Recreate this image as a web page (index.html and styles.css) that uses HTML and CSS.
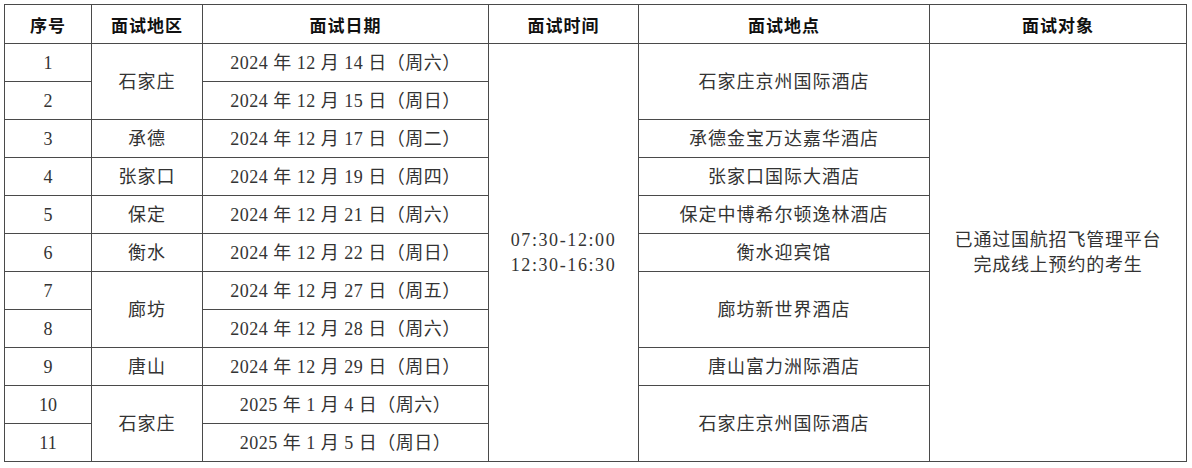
FILE: index.html
```html
<!DOCTYPE html>
<html lang="zh-CN">
<head>
<meta charset="utf-8">
<link rel="stylesheet" href="styles.css">
</head>
<body>
<div class="page">
<table class="schedule">
  <colgroup>
    <col class="c-no">
    <col class="c-area">
    <col class="c-date">
    <col class="c-time">
    <col class="c-place">
    <col class="c-target">
  </colgroup>
  <thead>
    <tr>
      <th>序号</th>
      <th>面试地区</th>
      <th>面试日期</th>
      <th>面试时间</th>
      <th>面试地点</th>
      <th>面试对象</th>
    </tr>
  </thead>
  <tbody>
    <tr>
      <td class="num">1</td>
      <td rowspan="2">石家庄</td>
      <td class="date">2024 年 12 月 14 日（周六）</td>
      <td rowspan="11" class="time">07:30-12:00<br>12:30-16:30</td>
      <td rowspan="2">石家庄京州国际酒店</td>
      <td rowspan="11" class="target">已通过国航招飞管理平台<br>完成线上预约的考生</td>
    </tr>
    <tr>
      <td class="num">2</td>
      <td class="date">2024 年 12 月 15 日（周日）</td>
    </tr>
    <tr>
      <td class="num">3</td>
      <td>承德</td>
      <td class="date">2024 年 12 月 17 日（周二）</td>
      <td>承德金宝万达嘉华酒店</td>
    </tr>
    <tr>
      <td class="num">4</td>
      <td>张家口</td>
      <td class="date">2024 年 12 月 19 日（周四）</td>
      <td>张家口国际大酒店</td>
    </tr>
    <tr>
      <td class="num">5</td>
      <td>保定</td>
      <td class="date">2024 年 12 月 21 日（周六）</td>
      <td>保定中博希尔顿逸林酒店</td>
    </tr>
    <tr>
      <td class="num">6</td>
      <td>衡水</td>
      <td class="date">2024 年 12 月 22 日（周日）</td>
      <td>衡水迎宾馆</td>
    </tr>
    <tr>
      <td class="num">7</td>
      <td rowspan="2">廊坊</td>
      <td class="date">2024 年 12 月 27 日（周五）</td>
      <td rowspan="2">廊坊新世界酒店</td>
    </tr>
    <tr>
      <td class="num">8</td>
      <td class="date">2024 年 12 月 28 日（周六）</td>
    </tr>
    <tr>
      <td class="num">9</td>
      <td>唐山</td>
      <td class="date">2024 年 12 月 29 日（周日）</td>
      <td>唐山富力洲际酒店</td>
    </tr>
    <tr>
      <td class="num">10</td>
      <td rowspan="2">石家庄</td>
      <td class="date">2025 年 1 月 4 日（周六）</td>
      <td rowspan="2">石家庄京州国际酒店</td>
    </tr>
    <tr>
      <td class="num">11</td>
      <td class="date">2025 年 1 月 5 日（周日）</td>
    </tr>
  </tbody>
</table>
</div>
</body>
</html>
```

FILE: styles.css
```css
html, body {
  margin: 0;
  padding: 0;
  background: #ffffff;
}

.page {
  padding: 4px 0 0 4px;
}

.schedule {
  border-collapse: collapse;
  table-layout: fixed;
  width: 1182px;
  font-family: "Liberation Serif", "Noto Sans CJK SC", serif;
  font-size: 18px;
  color: #333333;
}

.c-no { width: 87px; }
.c-area { width: 111px; }
.c-date { width: 286px; }
.c-time { width: 150px; }
.c-place { width: 291px; }
.c-target { width: 257px; }

.schedule th,
.schedule td {
  border: 1px solid #4a4a4a;
  text-align: center;
  vertical-align: middle;
  padding: 0;
}

.schedule th {
  height: 37px;
  padding-top: 1px;
  font-family: "Noto Sans CJK SC", sans-serif;
  font-weight: 700;
  font-size: 17px;
  color: #111111;
  letter-spacing: 1px;
}

.schedule td {
  height: 36px;
  padding-top: 1px;
  letter-spacing: 1px;
  line-height: 25px;
}

.schedule td.num {
  letter-spacing: 0;
}

.schedule td.date {
  letter-spacing: 0.5px;
}

.schedule td.time {
  letter-spacing: 1.6px;
  font-size: 18px;
}

.schedule td.target {
  letter-spacing: 0.8px;
}
```
